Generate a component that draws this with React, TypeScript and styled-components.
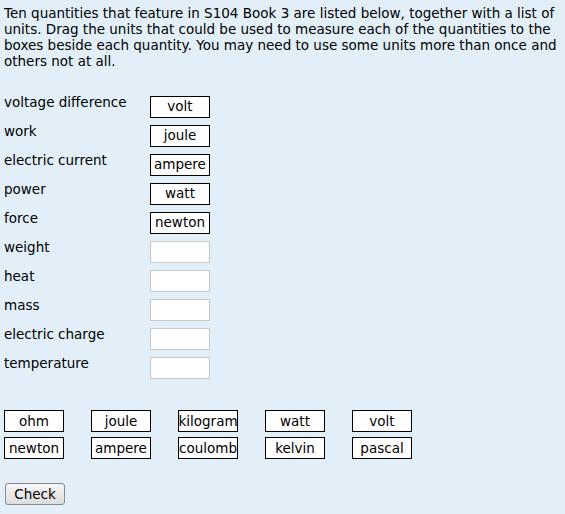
import React from "react";
import styled, { createGlobalStyle } from "styled-components";

const Global = createGlobalStyle`
  html, body { margin: 0; padding: 0; background: #e2eff9; }
  body { font-family: "DejaVu Sans", Verdana, sans-serif; font-size: 13.5px; color: #000; }
`;

const Page = styled.div`
  padding: 5px 4px 0 4px;
  width: 565px;
  height: 514px;
  box-sizing: border-box;
`;

const Intro = styled.p`
  margin: 0;
  line-height: 16px;
  width: 557px;
`;

const Rows = styled.div`
  margin-top: 27px;
  display: grid;
  grid-template-columns: 146px 60px;
  row-gap: 7px;
`;

const Label = styled.div`
  line-height: 16px;
  margin-top: -2px;
`;

const Drop = styled.div<{ $filled?: boolean }>`
  box-sizing: border-box;
  width: 60px;
  height: 22px;
  background: #fff;
  border: 1px solid ${(p) => (p.$filled ? "#000" : "#c8c8c8")};
  display: flex;
  align-items: center;
  justify-content: center;
  line-height: 1;
  white-space: nowrap;
`;

const Bank = styled.div`
  margin-top: 31px;
  display: grid;
  grid-template-columns: repeat(5, 60px);
  column-gap: 27px;
  row-gap: 5px;
`;

const Unit = styled.div`
  box-sizing: border-box;
  width: 60px;
  height: 22px;
  background: #fff;
  border: 1px solid #000;
  display: flex;
  align-items: center;
  justify-content: center;
  white-space: nowrap;
  overflow: hidden;
`;

const CheckButton = styled.button`
  margin: 24px 0 0 1px;
  box-sizing: border-box;
  width: 60px;
  height: 22px;
  font-family: "DejaVu Sans", Verdana, sans-serif;
  font-size: 13.5px;
  color: #000;
  border: 1px solid #8a8a8a;
  border-radius: 3px;
  background: linear-gradient(#f6f6f6, #dcdcdc);
  padding: 0;
  display: block;
`;

const rows: [string, string?][] = [
  ["voltage difference", "volt"],
  ["work", "joule"],
  ["electric current", "ampere"],
  ["power", "watt"],
  ["force", "newton"],
  ["weight"],
  ["heat"],
  ["mass"],
  ["electric charge"],
  ["temperature"],
];

const units = [
  "ohm", "joule", "kilogram", "watt", "volt",
  "newton", "ampere", "coulomb", "kelvin", "pascal",
];

export default function App() {
  return (
    <Page>
      <Global />
      <Intro>
        Ten quantities that feature in S104 Book 3 are listed below, together with a list of
        units. Drag the units that could be used to measure each of the quantities to the
        boxes beside each quantity. You may need to use some units more than once and
        others not at all.
      </Intro>
      <Rows>
        {rows.map(([q, u]) => (
          <React.Fragment key={q}>
            <Label>{q}</Label>
            <Drop $filled={!!u}>{u}</Drop>
          </React.Fragment>
        ))}
      </Rows>
      <Bank>
        {units.map((u) => (
          <Unit key={u}>{u}</Unit>
        ))}
      </Bank>
      <CheckButton>Check</CheckButton>
    </Page>
  );
}
